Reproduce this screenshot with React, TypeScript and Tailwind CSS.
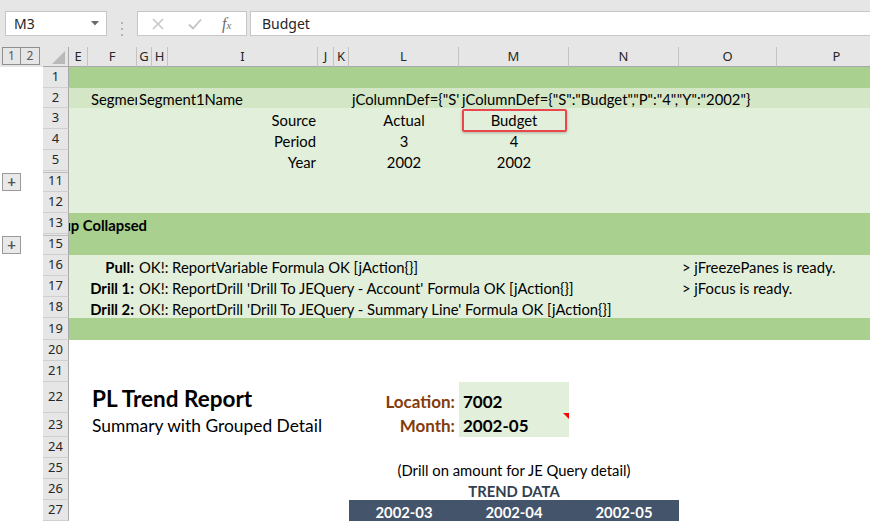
import type { ReactNode } from "react"

// column widths of the visible sheet area (E..P)
const W = {
  E: "w-[19px]",
  F: "w-[49px]",
  G: "w-[15px]",
  H: "w-[16px]",
  I: "w-[150px]",
  J: "w-[16px]",
  K: "w-[15px]",
  L: "w-[110px]",
  M: "w-[110px]",
  N: "w-[110px]",
  O: "w-[98px]",
  P: "w-[120px]",
}

const HEADERS: [string, string][] = [
  ["E", W.E],
  ["F", W.F],
  ["G", W.G],
  ["H", W.H],
  ["I", W.I],
  ["J", W.J],
  ["K", W.K],
  ["L", W.L],
  ["M", W.M],
  ["N", W.N],
  ["O", W.O],
  ["P", W.P],
]

function Cell({ w, className = "", children }: { w: string; className?: string; children?: ReactNode }) {
  return (
    <div className={`flex h-full shrink-0 items-end whitespace-nowrap leading-[18px] ${w} ${className}`}>
      {children}
    </div>
  )
}

function PlusButton() {
  return (
    <div className="flex h-[18px] w-[19px] items-center justify-center border border-[#9a9a9a] bg-[#e9e9e9] text-[15px] leading-none font-bold text-[#555]">
      +
    </div>
  )
}

function Row({
  n,
  h,
  bg = "bg-white",
  plus = false,
  hiddenAbove = false,
  children,
}: {
  n: number
  h: string
  bg?: string
  plus?: boolean
  hiddenAbove?: boolean
  children?: ReactNode
}) {
  return (
    <div className={`flex ${h}`}>
      <div className="flex w-[43px] shrink-0 items-center bg-white pl-[2px]">{plus && <PlusButton />}</div>
      <div
        className={`flex w-[26px] shrink-0 items-center justify-center border-r border-b border-r-[#a9a9a9] border-b-[#cfcfcf] bg-[#e6e6e6] font-['Noto_Sans',sans-serif] text-[13px] text-[#262626] ${
          hiddenAbove ? "shadow-[inset_0_1px_0_#e6e6e6,inset_0_2px_0_#bdbdbd]" : ""
        }`}
      >
        {n}
      </div>
      <div className={`flex min-w-0 flex-1 overflow-x-clip ${bg}`}>{children}</div>
    </div>
  )
}

function FormulaBar() {
  return (
    <div className="flex h-[47px] bg-[#e6e6e6] pt-[11px] font-['Noto_Sans',sans-serif] text-[14px] text-[#262626]">
      <div className="ml-[5px] flex h-[25px] w-[102px] items-center justify-between border border-[#c6c6c6] bg-white pr-[7px] pl-[8px]">
        <span>M3</span>
        <svg width="8" height="5" viewBox="0 0 8 5">
          <polygon points="0,0 8,0 4,4.5" fill="#6b6b6b" />
        </svg>
      </div>
      <div className="flex w-[30px] flex-col items-center justify-center gap-[4px]">
        <span className="h-[2px] w-[2px] bg-[#b3b3b3]" />
        <span className="h-[2px] w-[2px] bg-[#b3b3b3]" />
        <span className="h-[2px] w-[2px] bg-[#b3b3b3]" />
      </div>
      <div className="flex h-[25px] w-[110px] items-center border border-[#c6c6c6] bg-white">
        <svg className="ml-[14px]" width="12" height="12" viewBox="0 0 12 12">
          <path d="M1 1 L11 11 M11 1 L1 11" stroke="#c2c2c2" strokeWidth="1.4" fill="none" />
        </svg>
        <svg className="ml-[24px]" width="14" height="12" viewBox="0 0 14 12">
          <path d="M1 6.5 L5 10.5 L13 1.5" stroke="#c2c2c2" strokeWidth="1.8" fill="none" />
        </svg>
        <span className="ml-[20px] font-['Liberation_Serif',serif] text-[16px] text-[#6e6e6e] italic">
          f<span className="text-[11px]">x</span>
        </span>
      </div>
      <div className="ml-[3px] flex h-[25px] flex-1 items-center border-y border-l border-[#c6c6c6] bg-white pl-[11px]">
        Budget
      </div>
    </div>
  )
}

function ColumnHeaders() {
  return (
    <div className="flex h-[20px] bg-[#e6e6e6] font-['Noto_Sans',sans-serif] text-[13px] text-[#262626]">
      <div className="flex w-[43px] shrink-0 items-start pl-[2px]">
        <div className="flex h-[18px] w-[19px] items-center justify-center border border-[#8f8f8f] text-[12px] text-[#595959]">
          1
        </div>
        <div className="flex h-[18px] w-[19px] items-center justify-center border border-l-0 border-[#8f8f8f] text-[12px] text-[#595959]">
          2
        </div>
      </div>
      <div className="flex w-[26px] shrink-0 items-end justify-end border-r border-b border-[#a9a9a9] pr-[3px] pb-[2px]">
        <svg width="13" height="13" viewBox="0 0 13 13">
          <polygon points="13,0 13,13 0,13" fill="#b9b9b9" />
        </svg>
      </div>
      <div className="flex min-w-0 flex-1 overflow-hidden">
        {HEADERS.map(([c, w]) => (
          <div
            key={c}
            className={`flex shrink-0 items-center justify-center border-r border-b border-r-[#c3c3c3] border-b-[#a9a9a9] ${w}`}
          >
            {c}
          </div>
        ))}
      </div>
    </div>
  )
}

export default function App() {
  return (
    <div className="h-[521px] w-[870px] overflow-hidden bg-white font-['Lato',sans-serif] text-[14.8px] text-black">
      <FormulaBar />
      <ColumnHeaders />

      <Row n={1} h="h-[21px]" bg="bg-[#a9d08e]" />
      <Row n={2} h="h-[20px]" bg="bg-[#d3e6c6]">
        <Cell w={W.E} />
        <Cell w={W.F} className="overflow-hidden pl-[3px]">
          Segment1
        </Cell>
        <Cell w={W.G} className="pl-[2px]">
          Segment1Name
        </Cell>
        <Cell w={W.H} />
        <Cell w={W.I} />
        <Cell w={W.J} />
        <Cell w={W.K} />
        <Cell w={W.L} className="overflow-hidden pl-[3px]">
          {'jColumnDef={"S":"Actual","P":"3","Y":"2002"}'}
        </Cell>
        <Cell w={W.M} className="pl-[3px]">
          {'jColumnDef={"S":"Budget","P":"4","Y":"2002"}'}
        </Cell>
      </Row>
      {[
        ["Source", "Actual", "Budget"],
        ["Period", "3", "4"],
        ["Year", "2002", "2002"],
      ].map(([label, l, m], i) => (
        <Row key={label} n={i + 3} h="h-[21px]" bg="bg-[#e2efda]">
          <Cell w={W.E} />
          <Cell w={W.F} />
          <Cell w={W.G} />
          <Cell w={W.H} />
          <Cell w={W.I} className="justify-end pr-[2px]">
            {label}
          </Cell>
          <Cell w={W.J} />
          <Cell w={W.K} />
          <Cell w={W.L} className="justify-center">
            {l}
          </Cell>
          <Cell w={W.M} className="relative justify-center">
            {m}
            {i === 0 && (
              <div className="absolute top-[1px] left-[3px] h-[23px] w-[105px] rounded-[2px] border-2 border-[#e9474c] shadow-[0_1px_3px_rgba(0,0,0,0.25)]" />
            )}
          </Cell>
        </Row>
      ))}
      <Row n={11} h="h-[21px]" bg="bg-[#e2efda]" plus hiddenAbove />
      <Row n={12} h="h-[21px]" bg="bg-[#e2efda]" />
      <Row n={13} h="h-[21px]" bg="bg-[#a9d08e]">
        <Cell w={W.E} className="font-bold">
          <span className="-ml-[31px]">Group Collapsed</span>
        </Cell>
      </Row>
      <Row n={15} h="h-[21px]" bg="bg-[#a9d08e]" plus hiddenAbove />
      {[
        ["Pull:", "OK!: ReportVariable Formula OK [jAction{}]", "> jFreezePanes is ready."],
        ["Drill 1:", "OK!: ReportDrill 'Drill To JEQuery - Account' Formula OK [jAction{}]", "> jFocus is ready."],
        ["Drill 2:", "OK!: ReportDrill 'Drill To JEQuery - Summary Line' Formula OK [jAction{}]", ""],
      ].map(([label, msg, note], i) => (
        <Row key={label} n={i + 16} h="h-[21px]" bg="bg-[#e2efda]">
          <Cell w={W.E} />
          <Cell w={W.F} className="justify-end pr-[3px] font-bold">
            {label}
          </Cell>
          <Cell w={W.G} className="pl-[2px]">
            {msg}
          </Cell>
          <Cell w={W.H} />
          <Cell w={W.I} />
          <Cell w={W.J} />
          <Cell w={W.K} />
          <Cell w={W.L} />
          <Cell w={W.M} />
          <Cell w={W.N} />
          <Cell w={W.O} className="pl-[3px]">
            {note}
          </Cell>
        </Row>
      ))}
      <Row n={19} h="h-[22px]" bg="bg-[#a9d08e]" />
      <Row n={20} h="h-[21px]" />
      <Row n={21} h="h-[21px]" />
      <Row n={22} h="h-[31px]">
        <Cell w={W.E} />
        <Cell w={W.F} className="pl-[4px] text-[22.5px] leading-[28px] font-bold">
          PL Trend Report
        </Cell>
        <Cell w={W.G} />
        <Cell w={W.H} />
        <Cell w={W.I} />
        <Cell w={W.J} />
        <Cell w={W.K} />
        <Cell w={W.L} className="justify-end pr-[4px] text-[17px] leading-[22px] font-bold text-[#843c0c]">
          Location:
        </Cell>
        <Cell w={W.M} className="bg-[#e2efda] pl-[4px] text-[17px] leading-[22px] font-bold">
          7002
        </Cell>
      </Row>
      <Row n={23} h="h-[24px]">
        <Cell w={W.E} />
        <Cell w={W.F} className="pl-[4px] text-[17.4px] leading-[22px]">
          Summary with Grouped Detail
        </Cell>
        <Cell w={W.G} />
        <Cell w={W.H} />
        <Cell w={W.I} />
        <Cell w={W.J} />
        <Cell w={W.K} />
        <Cell w={W.L} className="justify-end pr-[4px] text-[17px] leading-[22px] font-bold text-[#843c0c]">
          Month:
        </Cell>
        <Cell w={W.M} className="relative bg-[#e2efda] pl-[4px] text-[17px] leading-[22px] font-bold">
          2002-05
          <svg className="absolute top-0 right-0" width="6" height="6" viewBox="0 0 6 6">
            <polygon points="0,0 6,0 6,6" fill="#ff0000" />
          </svg>
        </Cell>
      </Row>
      <Row n={24} h="h-[21px]" />
      <Row n={25} h="h-[21px]">
        <Cell w={W.E} />
        <Cell w={W.F} />
        <Cell w={W.G} />
        <Cell w={W.H} />
        <Cell w={W.I} />
        <Cell w={W.J} />
        <Cell w={W.K} />
        <Cell w={W.L} />
        <Cell w={W.M} className="justify-center">
          (Drill on amount for JE Query detail)
        </Cell>
      </Row>
      <Row n={26} h="h-[21px]">
        <Cell w={W.E} />
        <Cell w={W.F} />
        <Cell w={W.G} />
        <Cell w={W.H} />
        <Cell w={W.I} />
        <Cell w={W.J} />
        <Cell w={W.K} />
        <Cell w={W.L} />
        <Cell w={W.M} className="justify-center font-bold text-[#333f4f]">
          TREND DATA
        </Cell>
      </Row>
      <Row n={27} h="h-[21px]">
        <Cell w={W.E} />
        <Cell w={W.F} />
        <Cell w={W.G} />
        <Cell w={W.H} />
        <Cell w={W.I} />
        <Cell w={W.J} />
        <Cell w={W.K} />
        {["2002-03", "2002-04", "2002-05"].map((d) => (
          <Cell key={d} w={W.L} className="justify-center bg-[#44546a] font-bold text-white">
            {d}
          </Cell>
        ))}
      </Row>
    </div>
  )
}
